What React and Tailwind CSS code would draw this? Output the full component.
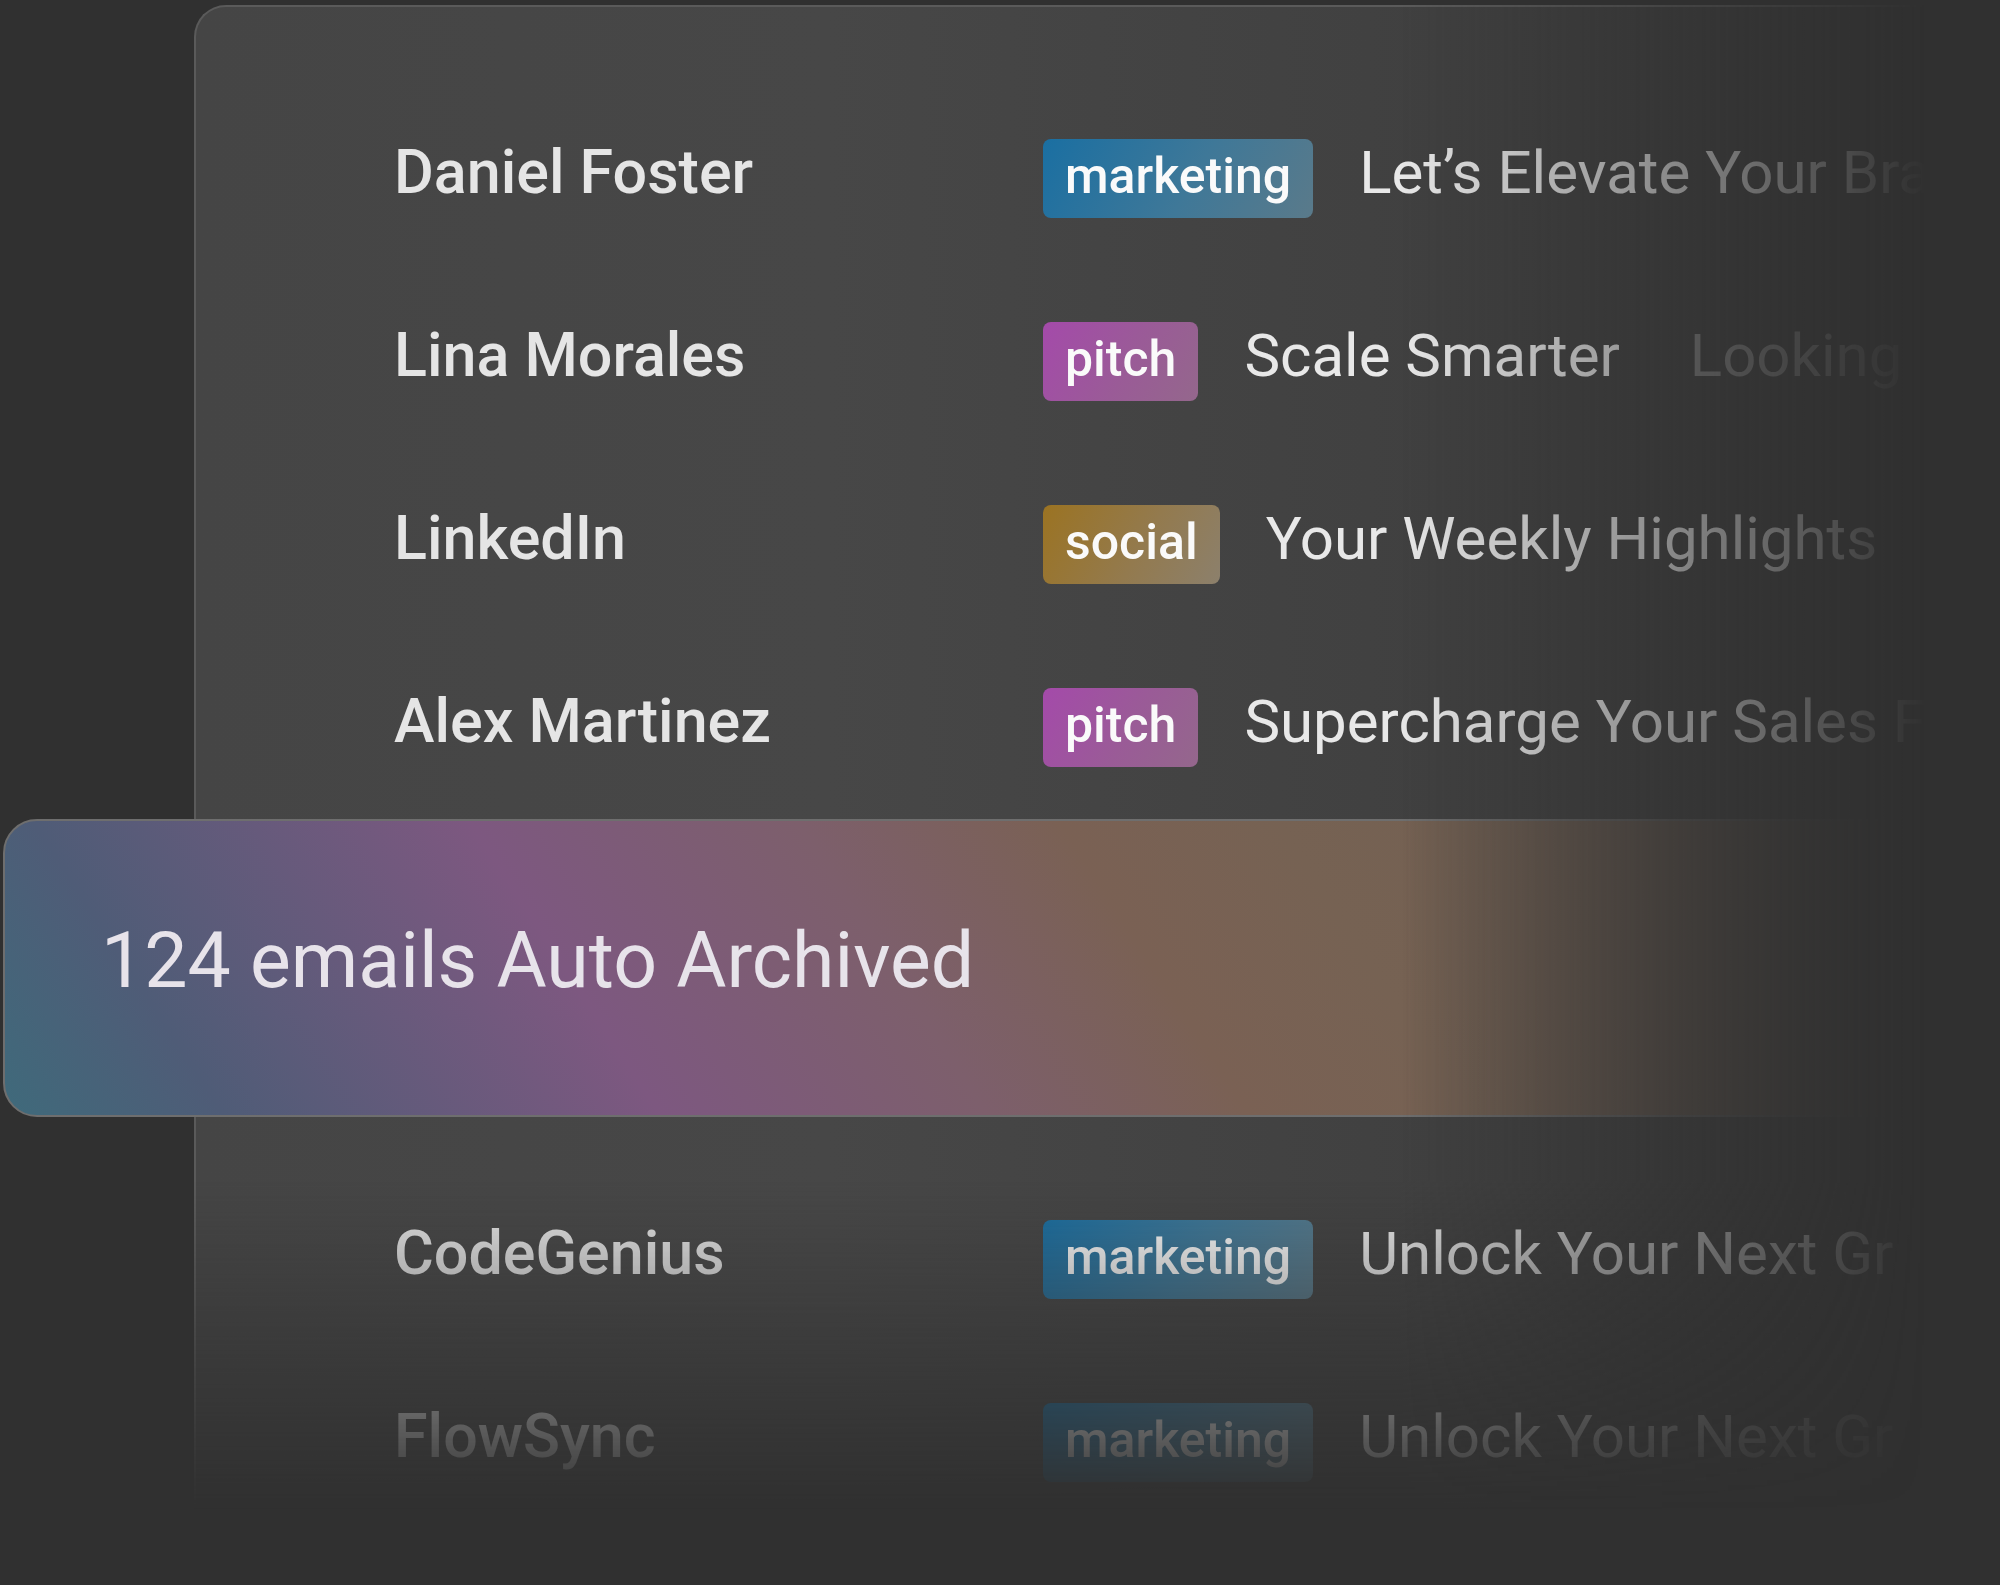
import React from "react";

const tagStyles = {
  marketing:
    "bg-[linear-gradient(120deg,#1a6fa2_0%,#3f7898_55%,#5a7a8a_100%)]",
  pitch: "bg-[linear-gradient(120deg,#a44aaa_0%,#9a5b97_55%,#94678c_100%)]",
  social: "bg-[linear-gradient(120deg,#9b7322_0%,#937a4e_55%,#8c806c_100%)]",
};

// subjects are cut where the panel fades out, as in the design
const topRows = [
  { name: "Daniel Foster", tag: "marketing", subject: "Let’s Elevate Your Bra" },
  { name: "Lina Morales", tag: "pitch", subject: "Scale Smarter", preview: "Looking" },
  { name: "LinkedIn", tag: "social", subject: "Your Weekly Highlights" },
  { name: "Alex Martinez", tag: "pitch", subject: "Supercharge Your Sales F" },
];

const bottomRows = [
  { name: "CodeGenius", tag: "marketing", subject: "Unlock Your Next Gr" },
  { name: "FlowSync", tag: "marketing", subject: "Unlock Your Next Gr" },
];

function Tag({ label }) {
  return (
    <span
      className={`shrink-0 rounded-lg px-[22px] pt-[12px] pb-[17px] text-[50px] font-medium leading-none text-[#fafafa] ${tagStyles[label]}`}
    >
      {label}
    </span>
  );
}

function MailRow({ row }) {
  return (
    <div className="flex h-[183px] items-center pl-[198px]">
      <div className="flex items-baseline whitespace-nowrap">
        <span className="w-[649px] shrink-0 text-[61px] font-medium leading-none text-[#e5e5e5]">
          {row.name}
        </span>
        <Tag label={row.tag} />
        <span className="ml-[46px] shrink-0 text-[60px] leading-none text-[#e8e8e8]">
          {row.subject}
        </span>
        {row.preview && (
          <span className="ml-[70px] shrink-0 text-[60px] leading-none text-[#858585]">
            {row.preview}
          </span>
        )}
      </div>
    </div>
  );
}

export default function App() {
  return (
    <div className="h-[1585px] w-[2000px] overflow-hidden bg-[#303030] font-[Roboto,sans-serif]">
      {/* fade to the right */}
      <div className="h-full [-webkit-mask-image:linear-gradient(to_right,black_1400px,transparent_1925px)] [mask-image:linear-gradient(to_right,black_1400px,transparent_1925px)]">
        {/* fade to the bottom */}
        <div className="h-full pt-[5px] [-webkit-mask-image:linear-gradient(to_bottom,black_1180px,transparent_1510px)] [mask-image:linear-gradient(to_bottom,black_1180px,transparent_1510px)]">
          <div className="ml-[194px] h-[1580px] rounded-tl-[32px] border-t-2 border-l-2 border-[#5a5a5a] bg-[linear-gradient(90deg,#454545_0%,#474747_35%,#414141_65%,#383838_100%)] pt-[80px]">
            {topRows.map((row) => (
              <MailRow key={row.name} row={row} />
            ))}

            {/* archived banner */}
            <div className="-ml-[193px] [-webkit-mask-image:linear-gradient(to_right,black_1400px,transparent_1900px)] [mask-image:linear-gradient(to_right,black_1400px,transparent_1900px)]">
              <div className="flex h-[298px] items-center rounded-[34px] border-2 border-[#6e6e6e] bg-[linear-gradient(57deg,#3f6a7b_0%,#4f5c77_10%,#7d5880_30%,#7d5f6c_45%,#7a6154_57%,#766253_67%,#6e5d50_100%)] pb-[14px] pl-[96px]">
                <span className="whitespace-nowrap text-[77px] leading-none text-[#e7e3ea]">
                  124 emails Auto Archived
                </span>
              </div>
            </div>

            <div className="mt-[51px]">
              {bottomRows.map((row) => (
                <MailRow key={row.name} row={row} />
              ))}
            </div>
          </div>
        </div>
      </div>
    </div>
  );
}
